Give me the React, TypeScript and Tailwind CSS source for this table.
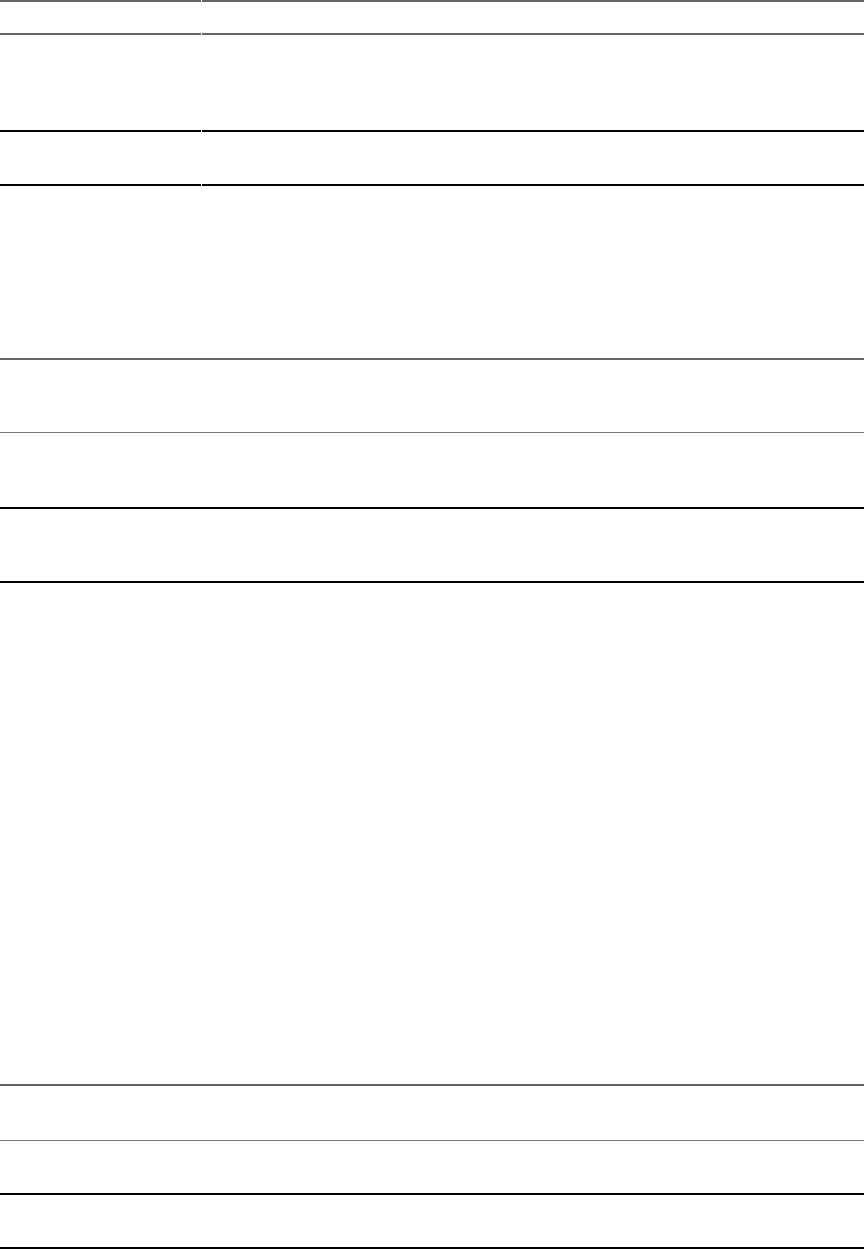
type Row = {
  h: string;
  line: string;
  split: boolean;
};

// heights include the bottom rule of each row
const rows: Row[] = [
  { h: "h-[33px]", line: "border-b-2 border-[#666]", split: true },
  { h: "h-[97px]", line: "border-b-2 border-black", split: true },
  { h: "h-[54px]", line: "border-b-2 border-black", split: true },
  { h: "h-[174px]", line: "border-b-2 border-[#666]", split: false },
  { h: "h-[73px]", line: "border-b border-[#777]", split: false },
  { h: "h-[76px]", line: "border-b-2 border-black", split: false },
  { h: "h-[74px]", line: "border-b-2 border-black", split: false },
  { h: "h-[503px]", line: "border-b-2 border-[#666]", split: false },
  { h: "h-[55px]", line: "border-b border-[#777]", split: false },
  { h: "h-[54px]", line: "border-b-2 border-black", split: false },
  { h: "h-[54px]", line: "border-b-2 border-black", split: false },
];

const App = () => {
  return (
    <div className="bg-white w-[865px] min-h-[1249px] font-['Liberation_Sans',sans-serif]">
      <div className="w-[864px] flex flex-col">
        <div className="flex h-[2px]">
          <div className="w-[201px] bg-[#666]"></div>
          <div className="w-px"></div>
          <div className="flex-1 bg-[#666]"></div>
        </div>
        {rows.map((r, i) =>
          r.split ? (
            <div key={i} className={`flex ${r.h}`}>
              <div className={`w-[201px] box-border ${r.line}`}></div>
              <div className="w-px"></div>
              <div className={`flex-1 box-border ${r.line}`}></div>
            </div>
          ) : (
            <div key={i} className={`box-border ${r.h} ${r.line}`}></div>
          )
        )}
      </div>
    </div>
  );
};

export default App;
